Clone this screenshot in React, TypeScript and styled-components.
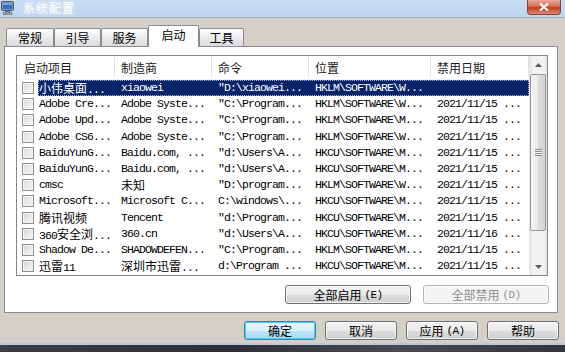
import React from "react";
import styled, { createGlobalStyle } from "styled-components";

const GlobalStyle = createGlobalStyle`
  html, body {
    margin: 0;
    padding: 0;
    background: #d4d0c8;
  }
  body {
    font-family: "Noto Sans CJK SC", "Noto Sans", sans-serif;
    font-size: 12px;
  }
`;

const Screen = styled.div`
  width: 565px;
  height: 352px;
  overflow: hidden;
  display: flex;
  flex-direction: column;
  background: #d4d0c8;
`;

const TitleBar = styled.div`
  height: 17px;
  flex-shrink: 0;
  display: flex;
  align-items: flex-start;
  background: linear-gradient(180deg, #c8def4 0%, #bdd5ef 100%);
  border-bottom: 1px solid #a3b3c4;
`;

const TitleIcon = styled.div`
  width: 14px;
  height: 15px;
  margin-left: 1px;
  display: flex;
`;

const TitleText = styled.div`
  margin-left: 8px;
  line-height: 16px;
  font-size: 12px;
  color: #ffffff;
  text-shadow: 0 0 4px rgba(255, 255, 255, 1), 0 0 1px rgba(170, 190, 215, 0.8);
  letter-spacing: 1px;
`;

const CloseButton = styled.div`
  margin-left: auto;
  margin-right: 4px;
  width: 34px;
  height: 15px;
  box-sizing: border-box;
  border: 1px solid #83423a;
  border-top: none;
  border-radius: 0 0 4px 4px;
  background: linear-gradient(180deg, #e9a99b 0%, #d56a58 45%, #c23b26 55%, #d98b74 100%);
  display: flex;
  align-items: center;
  justify-content: center;
`;

const Body = styled.div`
  flex: 1;
  display: flex;
  flex-direction: column;
  padding: 0 6px 0 4px;
`;

const TabStrip = styled.div`
  height: 28px;
  display: flex;
  align-items: flex-end;
  padding-left: 2px;
`;

const Tab = styled.div<{ $active?: boolean; $w: number }>`
  width: ${({ $w }) => $w}px;
  height: ${({ $active }) => ($active ? 22 : 18)}px;
  margin-bottom: ${({ $active }) => ($active ? -1 : 0)}px;
  box-sizing: border-box;
  border: 1px solid #898c95;
  border-bottom: none;
  border-radius: 2px 2px 0 0;
  background: ${({ $active }) =>
    $active ? "#ffffff" : "linear-gradient(180deg, #fdfdfd 0%, #ececec 50%, #dcdcdc 100%)"};
  display: flex;
  align-items: ${({ $active }) => ($active ? "flex-start" : "center")};
  padding-top: ${({ $active }) => ($active ? 1 : 0)}px;
  justify-content: center;
  font-size: 12px;
  line-height: 16px;
  color: #000;
  position: relative;
  z-index: ${({ $active }) => ($active ? 1 : 0)};
`;

const Panel = styled.div`
  width: 554px;
  height: 267px;
  box-sizing: border-box;
  border: 1px solid #898c95;
  background: #ffffff;
  padding: 8px 8px 0 11px;
  display: flex;
  flex-direction: column;
`;

const ListBox = styled.div`
  width: 532px;
  height: 221px;
  box-sizing: border-box;
  border: 1px solid #828790;
  display: flex;
  background: #fff;
`;

const Columns = styled.div`
  width: 512px;
  display: flex;
  flex-direction: column;
`;

const HeaderRow = styled.div`
  height: 24px;
  display: flex;
  box-sizing: border-box;
  border-bottom: 1px solid #eef0f3;
`;

const HeaderCell = styled.div<{ $w: number; $pad: number }>`
  width: ${({ $w }) => $w}px;
  box-sizing: border-box;
  padding-left: ${({ $pad }) => $pad}px;
  border-right: 1px solid #dde1e6;
  margin: 1px 0 2px;
  display: flex;
  align-items: center;
  font-size: 12px;
  color: #1a1a1a;
`;

const Row = styled.div`
  height: 16.2px;
  display: flex;
`;

const CheckCell = styled.div`
  width: 21px;
  display: flex;
  align-items: center;
  padding-left: 5px;
  box-sizing: border-box;
`;

const CheckBox = styled.div`
  width: 12px;
  height: 12px;
  box-sizing: border-box;
  border: 1px solid #8f8f8f;
  background: linear-gradient(135deg, #d6d6d6 0%, #ececec 60%, #f7f7f7 100%);
  box-shadow: inset 0 0 0 1px #f4f4f4;
`;

const RowBody = styled.div<{ $selected?: boolean }>`
  flex: 1;
  display: flex;
  background: ${({ $selected }) => ($selected ? "#0a246a" : "transparent")};
  color: ${({ $selected }) => ($selected ? "#ffffff" : "#000000")};
  outline: ${({ $selected }) => ($selected ? "1px dotted #9fb0d6" : "none")};
  outline-offset: -1px;
`;

const Cell = styled.div<{ $w: number; $pad: number }>`
  width: ${({ $w }) => $w}px;
  box-sizing: border-box;
  padding-left: ${({ $pad }) => $pad}px;
  white-space: nowrap;
  overflow: hidden;
  font-family: "Liberation Mono", "DejaVu Sans Mono", monospace;
  font-size: 11.5px;
  letter-spacing: -0.9px;
  line-height: 16px;
`;

const Han = styled.span`
  font-family: "Noto Sans CJK SC", sans-serif;
  font-size: 12px;
  letter-spacing: 0;
`;

const ScrollBar = styled.div`
  width: 18px;
  display: flex;
  flex-direction: column;
  background: linear-gradient(90deg, #e3e3e3 0%, #f3f3f3 25%, #f3f3f3 75%, #e6e6e6 100%);
`;

const ArrowButton = styled.div`
  height: 17px;
  display: flex;
  align-items: center;
  justify-content: center;
`;

const Thumb = styled.div`
  height: 157px;
  margin: 1px 1px 0;
  box-sizing: border-box;
  border: 1px solid #979797;
  border-radius: 2px;
  background: linear-gradient(90deg, #f4f4f4 0%, #ebebeb 45%, #dbdbdb 55%, #d3d3d3 100%);
  display: flex;
  align-items: center;
  justify-content: center;
`;

const Grip = styled.div`
  width: 7px;
  height: 7px;
  background: repeating-linear-gradient(180deg, #8a8a8a 0 1px, #f6f6f6 1px 2px);
`;

const TrackFill = styled.div`
  flex: 1;
`;

const PanelButtons = styled.div`
  margin-top: 9px;
  display: flex;
  justify-content: flex-end;
  gap: 12px;
`;

const DialogButtons = styled.div`
  margin-top: 8px;
  display: flex;
  justify-content: flex-end;
  gap: 9px;
`;

type Variant = "normal" | "default" | "disabled";

const Button = styled.div<{ $w: number; $variant?: Variant }>`
  width: ${({ $w }) => $w}px;
  height: 19px;
  box-sizing: border-box;
  border-radius: 3px;
  border: 1px solid
    ${({ $variant }) =>
      $variant === "default" ? "#3c7fb1" : $variant === "disabled" ? "#b2b6b9" : "#707070"};
  background: ${({ $variant }) =>
    $variant === "default"
      ? "linear-gradient(180deg, #eaf6fd 0%, #d9f0fc 50%, #bee6fd 51%, #a7d9f5 100%)"
      : $variant === "disabled"
      ? "#f4f4f4"
      : "linear-gradient(180deg, #f2f2f2 0%, #ebebeb 50%, #dddddd 51%, #cfcfcf 100%)"};
  box-shadow: ${({ $variant }) =>
    $variant === "default" ? "inset 0 0 0 1px #48d1fa" : "inset 0 0 0 1px rgba(255,255,255,0.7)"};
  color: ${({ $variant }) => ($variant === "disabled" ? "#8e8e8e" : "#000")};
  display: flex;
  align-items: center;
  justify-content: center;
  font-size: 12px;
  line-height: 16px;
`;

const Mono = styled.span`
  font-family: "Liberation Mono", monospace;
  font-size: 11px;
  letter-spacing: -0.6px;
  margin-left: 3px;
`;

const BottomStrip = styled.div`
  height: 9px;
  flex-shrink: 0;
  box-sizing: border-box;
  border-top: 2px solid #b9cade;
  background: linear-gradient(90deg, #3c4046 0%, #2c3035 40%, #474b51 70%, #33373c 100%);
`;

const mixed = (s: string) =>
  s
    .split(/([\u3400-\u9fff]+)/)
    .filter((p) => p.length > 0)
    .map((p, i) => (/[\u3400-\u9fff]/.test(p) ? <Han key={i}>{p}</Han> : <React.Fragment key={i}>{p}</React.Fragment>));

const headers = [
  { label: "启动项目", w: 98, pad: 7 },
  { label: "制造商", w: 97, pad: 6 },
  { label: "命令", w: 97, pad: 6 },
  { label: "位置", w: 122, pad: 6 },
  { label: "禁用日期", w: 98, pad: 6 },
];

const cellSpec = [
  { w: 77, pad: 1 },
  { w: 97, pad: 6 },
  { w: 97, pad: 6 },
  { w: 122, pad: 6 },
  { w: 98, pad: 6 },
];

const rows: string[][] = [
  ["小伟桌面...", "xiaowei", "\"D:\\xiaowei...", "HKLM\\SOFTWARE\\W...", ""],
  ["Adobe Cre...", "Adobe Syste...", "\"C:\\Program...", "HKLM\\SOFTWARE\\W...", "2021/11/15 ..."],
  ["Adobe Upd...", "Adobe Syste...", "\"C:\\Program...", "HKLM\\SOFTWARE\\M...", "2021/11/15 ..."],
  ["Adobe CS6...", "Adobe Syste...", "\"C:\\Program...", "HKLM\\SOFTWARE\\W...", "2021/11/15 ..."],
  ["BaiduYunG...", "Baidu.com, ...", "\"d:\\Users\\A...", "HKCU\\SOFTWARE\\M...", "2021/11/15 ..."],
  ["BaiduYunG...", "Baidu.com, ...", "\"d:\\Users\\A...", "HKCU\\SOFTWARE\\M...", "2021/11/15 ..."],
  ["cmsc", "未知", "\"D:\\program...", "HKLM\\SOFTWARE\\W...", "2021/11/15 ..."],
  ["Microsoft...", "Microsoft C...", "C:\\windows\\...", "HKCU\\SOFTWARE\\M...", "2021/11/15 ..."],
  ["腾讯视频", "Tencent", "\"d:\\Program...", "HKCU\\SOFTWARE\\M...", "2021/11/15 ..."],
  ["360安全浏...", "360.cn", "\"d:\\Users\\A...", "HKCU\\SOFTWARE\\M...", "2021/11/16 ..."],
  ["Shadow De...", "SHADOWDEFEN...", "\"C:\\Program...", "HKLM\\SOFTWARE\\M...", "2021/11/15 ..."],
  ["迅雷11", "深圳市迅雷...", "d:\\Program ...", "HKCU\\SOFTWARE\\M...", "2021/11/15 ..."],
];

const tabs = [
  { label: "常规", w: 48 },
  { label: "引导", w: 47 },
  { label: "服务", w: 47 },
  { label: "启动", w: 51, active: true },
  { label: "工具", w: 45 },
];

function AppIcon() {
  return (
    <svg width="14" height="15" viewBox="0 0 14 15">
      <rect x="0.5" y="1.5" width="12" height="9" rx="1" fill="#8a95a6" stroke="#4b5568" />
      <rect x="2" y="3" width="9" height="6" fill="#2f6fc6" />
      <rect x="2" y="3" width="9" height="2" fill="#6aa3e6" />
      <rect x="4" y="11" width="5" height="1.5" fill="#6b7485" />
      <rect x="2" y="12.5" width="9" height="2" rx="0.5" fill="#9aa3b1" stroke="#5d6676" strokeWidth="0.6" />
    </svg>
  );
}

function Arrow({ down }: { down?: boolean }) {
  return (
    <svg width="7" height="4" viewBox="0 0 7 4">
      <path d={down ? "M0 0 H7 L3.5 4 Z" : "M0 4 H7 L3.5 0 Z"} fill="#5a5a5a" />
    </svg>
  );
}

export default function App() {
  return (
    <>
      <GlobalStyle />
      <Screen>
        <TitleBar>
          <TitleIcon>
            <AppIcon />
          </TitleIcon>
          <TitleText>系统配置</TitleText>
          <CloseButton>
            <svg width="10" height="8" viewBox="0 0 10 8">
              <path d="M1 0.5 L9 7.5 M9 0.5 L1 7.5" stroke="#ffffff" strokeWidth="2" />
            </svg>
          </CloseButton>
        </TitleBar>
        <Body>
          <TabStrip>
            {tabs.map((t) => (
              <Tab key={t.label} $w={t.w} $active={t.active}>
                {t.label}
              </Tab>
            ))}
          </TabStrip>
          <Panel>
            <ListBox>
              <Columns>
                <HeaderRow>
                  {headers.map((h) => (
                    <HeaderCell key={h.label} $w={h.w} $pad={h.pad}>
                      {h.label}
                    </HeaderCell>
                  ))}
                </HeaderRow>
                {rows.map((r, i) => (
                  <Row key={i}>
                    <CheckCell>
                      <CheckBox />
                    </CheckCell>
                    <RowBody $selected={i === 0}>
                      {r.map((text, j) => (
                        <Cell key={j} $w={cellSpec[j].w} $pad={cellSpec[j].pad}>
                          {mixed(text)}
                        </Cell>
                      ))}
                    </RowBody>
                  </Row>
                ))}
              </Columns>
              <ScrollBar>
                <ArrowButton>
                  <Arrow />
                </ArrowButton>
                <Thumb>
                  <Grip />
                </Thumb>
                <TrackFill />
                <ArrowButton>
                  <Arrow down />
                </ArrowButton>
              </ScrollBar>
            </ListBox>
            <PanelButtons>
              <Button $w={126}>
                全部启用<Mono>(E)</Mono>
              </Button>
              <Button $w={126} $variant="disabled">
                全部禁用<Mono>(D)</Mono>
              </Button>
            </PanelButtons>
          </Panel>
          <DialogButtons>
            <Button $w={72} $variant="default">
              确定
            </Button>
            <Button $w={72}>取消</Button>
            <Button $w={72}>
              应用<Mono>(A)</Mono>
            </Button>
            <Button $w={72}>帮助</Button>
          </DialogButtons>
        </Body>
        <BottomStrip />
      </Screen>
    </>
  );
}
